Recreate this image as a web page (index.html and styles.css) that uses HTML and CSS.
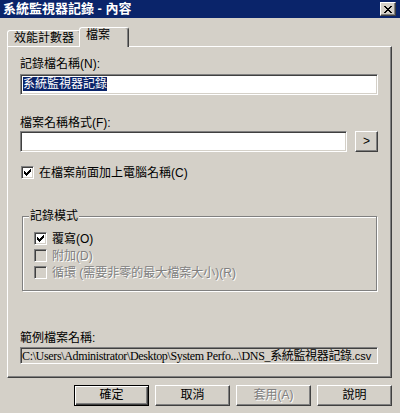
FILE: index.html
```html
<!DOCTYPE html>
<html lang="zh-Hant">
<head>
  <meta charset="UTF-8">
  <meta name="viewport" content="width=device-width, initial-scale=1.0">
  <title>系統監視器記錄 - 內容</title>
  <link rel="stylesheet" href="styles.css">
</head>
<body>
  <div class="window">
    <div class="titlebar">
      <span class="title">系統監視器記錄 - 內容</span>
      <span class="close">
        <svg width="8" height="7" viewBox="0 0 8 7" shape-rendering="crispEdges">
          <polygon points="0,0 2,0 8,7 6,7" fill="#000"/>
          <polygon points="6,0 8,0 2,7 0,7" fill="#000"/>
        </svg>
      </span>
    </div>

    <div class="tabs">
      <div class="tab">效能計數器</div>
      <div class="tab active">檔案</div>
    </div>

    <div class="panel">
      <div class="label">記錄檔名稱(N):</div>
      <div class="field field-name"><span class="selected">系統監視器記錄</span></div>

      <div class="label label-format">檔案名稱格式(F):</div>
      <div class="field-row">
        <div class="field"></div>
        <div class="btn btn-small">&gt;</div>
      </div>

      <div class="check check-prefix">
        <span class="box">
          <svg width="7" height="7" viewBox="0 0 7 7" shape-rendering="crispEdges">
            <polygon points="0,2 2,4 7,-1 7,2 2,7 0,5" fill="#000"/>
          </svg>
        </span>
        <span>在檔案前面加上電腦名稱(C)</span>
      </div>

      <fieldset class="group">
        <legend>記錄模式</legend>
        <div class="group-body">
          <div class="check">
            <span class="box">
              <svg width="7" height="7" viewBox="0 0 7 7" shape-rendering="crispEdges">
                <polygon points="0,2 2,4 7,-1 7,2 2,7 0,5" fill="#000"/>
              </svg>
            </span>
            <span>覆寫(O)</span>
          </div>
          <div class="check disabled">
            <span class="box"></span>
            <span>附加(D)</span>
          </div>
          <div class="check disabled">
            <span class="box"></span>
            <span>循環 (需要非零的最大檔案大小)(R)</span>
          </div>
        </div>
      </fieldset>

      <div class="label label-sample">範例檔案名稱:</div>
      <div class="field readonly">C:\Users\Administrator\Desktop\System Perfo...\DNS_系統監視器記錄<span class="ext">.csv</span></div>
    </div>

    <div class="buttons">
      <div class="btn default">確定</div>
      <div class="btn">取消</div>
      <div class="btn disabled">套用(A)</div>
      <div class="btn">說明</div>
    </div>
  </div>
</body>
</html>
```

FILE: styles.css
```css
body {
  margin: 0;
  background: #d4d0c8;
  font-family: "Liberation Sans", "Noto Sans CJK TC", sans-serif;
  font-size: 12px;
  line-height: 14px;
  color: #000;
}
.window {
  width: 400px;
  height: 413px;
  overflow: hidden;
}

/* title bar */
.titlebar {
  height: 18px;
  background: #0a246a;
  display: flex;
  align-items: center;
  justify-content: space-between;
  padding: 0 4px 0 3px;
}
.title {
  color: #fff;
  font-weight: bold;
  font-size: 13px;
  line-height: 18px;
}
.close {
  width: 16px;
  height: 14px;
  box-sizing: border-box;
  background: #d4d0c8;
  border: 1px solid;
  border-color: #fff #404040 #404040 #fff;
  box-shadow: inset -1px -1px #808080;
  display: flex;
  align-items: center;
  justify-content: center;
}

/* tabs */
.tabs {
  height: 28px;
  display: flex;
  align-items: flex-end;
  padding-left: 7px;
}
.tab {
  box-sizing: border-box;
  width: 74px;
  height: 16px;
  padding-left: 6px;
  border: 1px solid;
  border-bottom: none;
  border-color: #fff #404040 #fff #fff;
  border-radius: 3px 3px 0 0;
  box-shadow: inset -1px 0 #808080;
  white-space: nowrap;
}
.tab.active {
  width: 50px;
  height: 20px;
  margin-left: -2px;
  margin-bottom: -1px;
  background: #d4d0c8;
  position: relative;
  z-index: 1;
}

/* tab page */
.panel {
  box-sizing: border-box;
  width: 385px;
  height: 332px;
  margin-left: 7px;
  padding: 10px 13px 0 12px;
  border: 1px solid;
  border-color: #fff #404040 #404040 #fff;
  box-shadow: inset -1px -1px #808080;
}
.label-format {
  margin-top: 21px;
}
.label-sample {
  margin-top: 40px;
}
.field {
  box-sizing: border-box;
  height: 21px;
  background: #fff;
  border: 1px solid;
  border-color: #808080 #fff #fff #808080;
  box-shadow: inset 1px 1px #404040, inset -1px -1px #d4d0c8;
  padding: 2px 0 0 2px;
  white-space: nowrap;
  overflow: hidden;
}
.field-name {
  margin-top: 3px;
}
.selected {
  display: inline-block;
  background: #0a246a;
  color: #fff;
}
.field-row {
  display: flex;
  gap: 8px;
  margin-top: 1px;
}
.field-row .field {
  flex: 1;
}
.readonly {
  height: 17px;
  margin-top: 2px;
  padding: 1px 0 0 1px;
  background: #d4d0c8;
  font-family: "Liberation Serif", "Noto Sans CJK TC", serif;
  letter-spacing: -0.35px;
}
.readonly .ext {
  font-family: "Liberation Sans", sans-serif;
  font-size: 11px;
  letter-spacing: 0;
}

/* checkboxes */
.check {
  display: flex;
  align-items: center;
  gap: 5px;
  height: 17px;
  white-space: nowrap;
}
.check-prefix {
  height: 15px;
  margin-top: 13px;
  padding-left: 1px;
}
.box {
  box-sizing: border-box;
  width: 13px;
  height: 13px;
  background: #fff;
  border: 1px solid;
  border-color: #808080 #fff #fff #808080;
  box-shadow: inset 1px 1px #404040, inset -1px -1px #d4d0c8;
  display: flex;
  align-items: center;
  justify-content: center;
}
.check.disabled .box {
  background: #d4d0c8;
}
.disabled {
  color: #808080;
  text-shadow: 1px 1px 0 #fff;
}

/* group box */
.group {
  margin: 29px 1px 0 2px;
  padding: 0;
  min-width: 0;
  border: 1px solid #808080;
  box-shadow: inset 1px 1px #fff, 1px 1px #fff;
}
.group legend {
  margin-left: 6px;
  padding: 0 1px;
  background: #d4d0c8;
}
.group-body {
  padding: 7px 0 9px 11px;
}

/* dialog buttons */
.buttons {
  display: flex;
  justify-content: flex-end;
  gap: 6px;
  margin-top: 7px;
  padding-right: 8px;
}
.btn {
  box-sizing: border-box;
  width: 75px;
  height: 21px;
  border: 1px solid;
  border-color: #fff #404040 #404040 #fff;
  box-shadow: inset -1px -1px #808080;
  text-align: center;
  line-height: 18px;
}
.btn.default {
  border-color: #000;
  box-shadow: inset 1px 1px #fff, inset -1px -1px #404040, inset -2px -2px #808080;
}
.btn-small {
  width: 23px;
  line-height: 18px;
}
```
